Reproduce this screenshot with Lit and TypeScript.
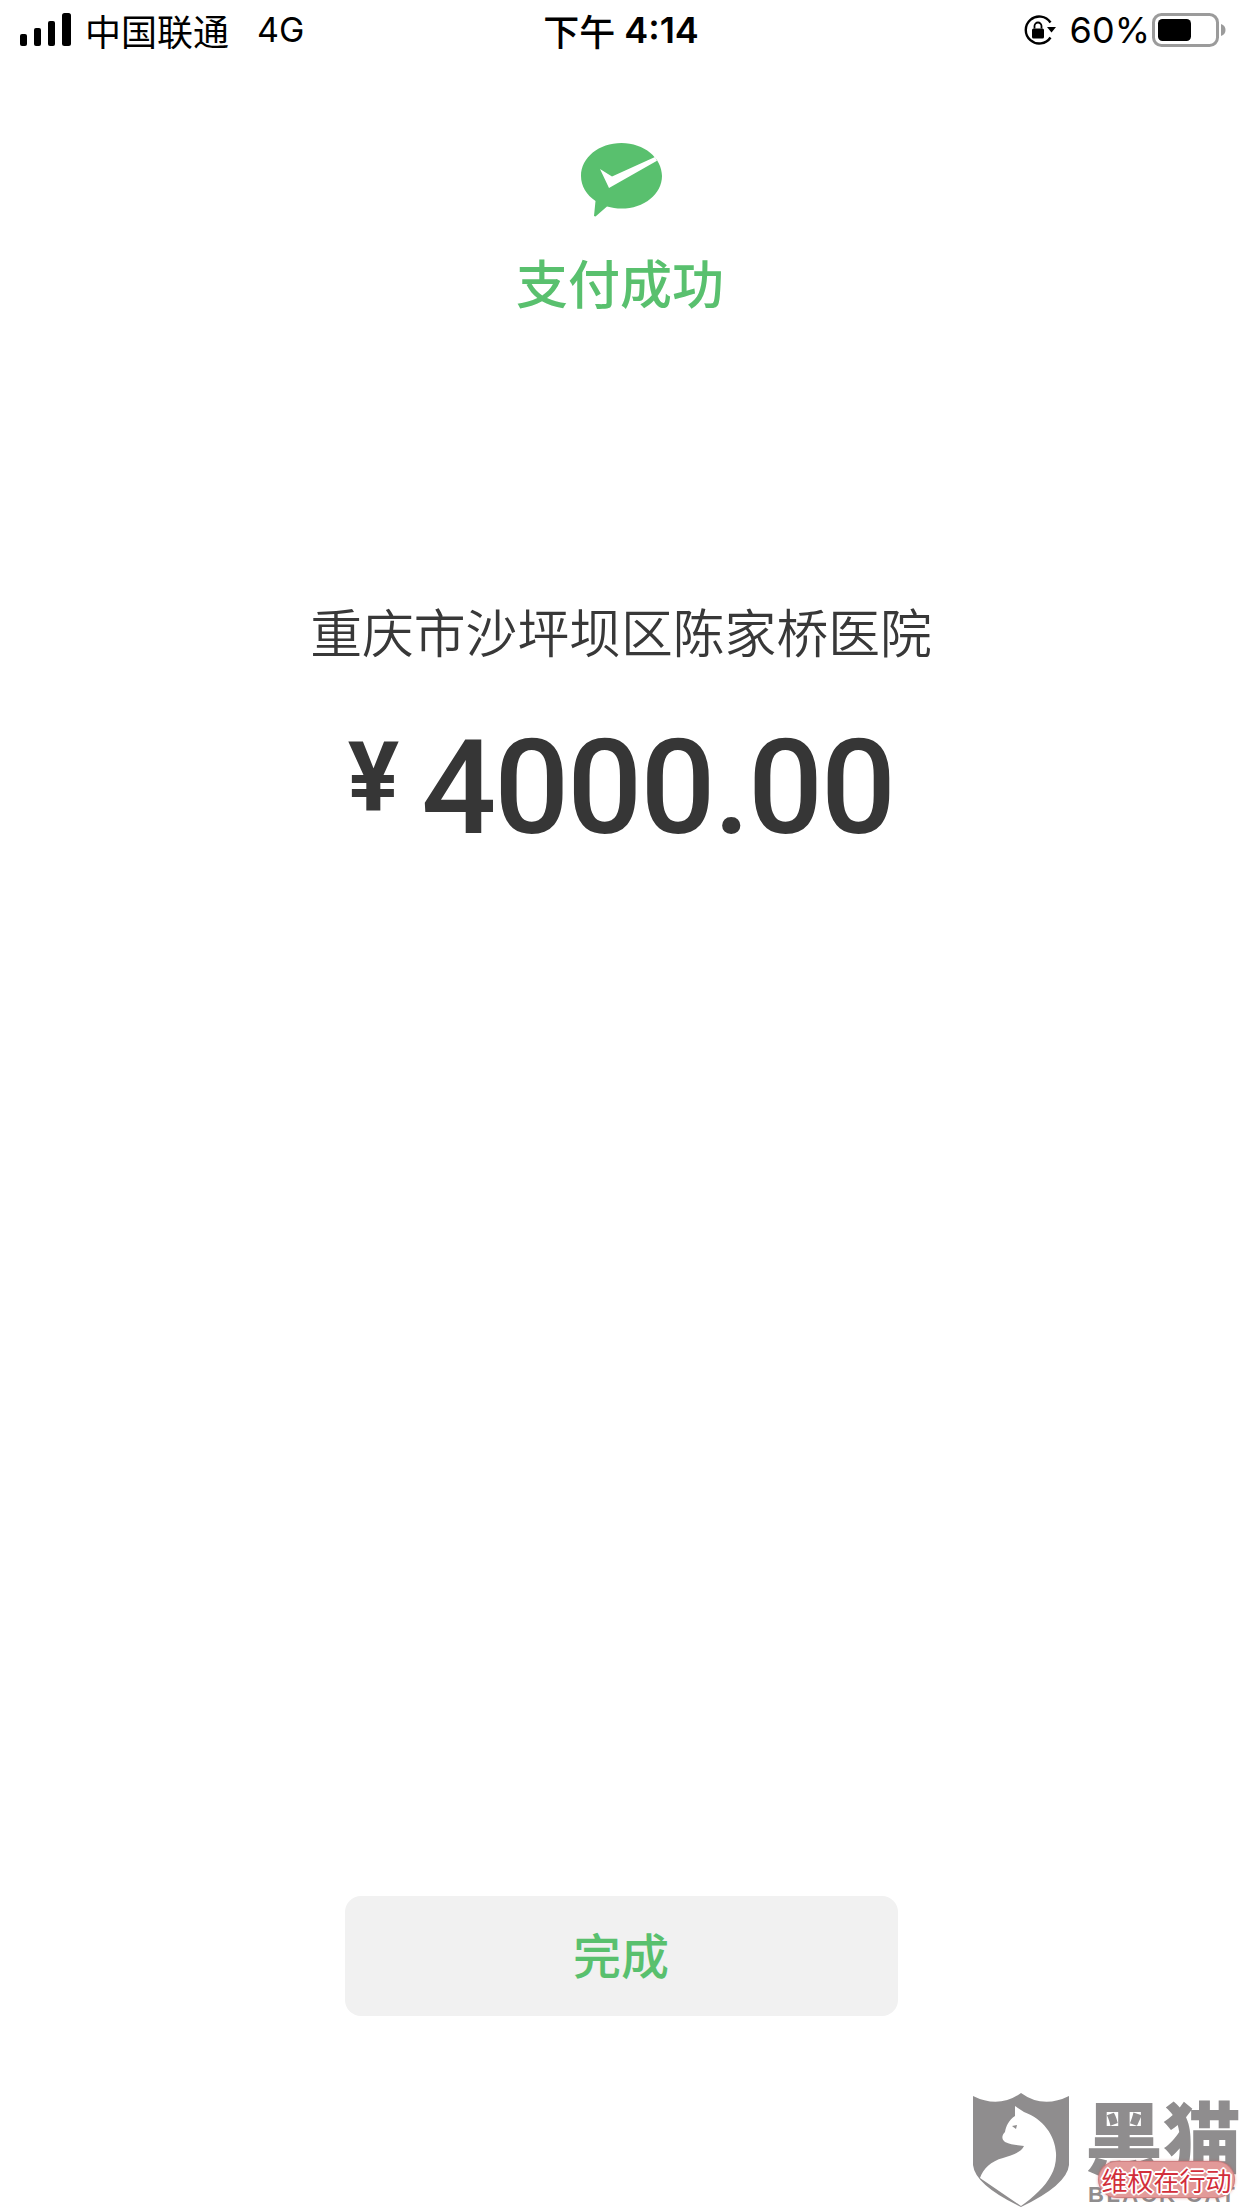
import { LitElement, html, css } from "lit";
import { customElement } from "lit/decorators.js";

const CJK = `"Noto Sans CJK SC", "Inter", sans-serif`;
const UI = `"Inter", "Noto Sans CJK SC", sans-serif`;

@customElement("app-root")
export class AppRoot extends LitElement {
  static styles = css`
    :host {
      display: block;
      position: relative;
      width: 1242px;
      height: 2208px;
      background: #fff;
      overflow: hidden;
      font-family: ${css([CJK] as any)};
    }
    .page { display: flex; flex-direction: column; align-items: center; height: 100%; }
    .status {
      align-self: stretch;
      height: 60px;
      display: grid;
      grid-template-columns: 1fr auto 1fr;
      align-items: center;
      color: #000;
      font-size: 36px;
    }
    .left { display: flex; align-items: center; padding-left: 20px; }
    .bars { display: block; margin-right: 13px; }
    .carrier { line-height: 60px; }
    .net { margin-left: 28px; font-family: ${css([UI] as any)}; font-size: 34px; line-height: 60px; }
    .time { font-size: 36px; font-weight: 500; line-height: 60px; display: flex; gap: 9px; }
    .time b { font-family: ${css([UI] as any)}; font-weight: 600; font-size: 36px; }
    .right { display: flex; align-items: center; justify-content: flex-end; padding-right: 16px; }
    .pct { font-family: ${css([UI] as any)}; font-size: 36px; margin: 0 2px 0 14px; line-height: 60px; }
    .logo { display: block; margin-top: 83px; }
    .title { margin-top: 30px; margin-right: 2px; font-size: 52px; line-height: 70px; color: #59c06e; font-weight: 500; }
    .shop { margin-top: 276px; font-size: 51.800px; line-height: 76px; color: #383838; font-weight: 350; }
    .amount { margin-top: 44px; display: flex; align-items: flex-start; color: #363636; font-family: Roboto, sans-serif; }
    .yen { font-size: 96px; font-weight: 700; line-height: 128px; margin-right: 22px; }
    .num { font-size: 132px; font-weight: 500; line-height: 150px; letter-spacing: -2px; }
    .done {
      margin-top: auto;
      margin-bottom: 192px;
      width: 553px;
      height: 120px;
      border-radius: 16px;
      border: 0;
      padding: 0 0 7px;
      background: #f1f1f1;
      color: #59c06e;
      font-family: inherit;
      font-size: 48px;
      font-weight: 500;
    }
    .wm { position: absolute; left: 973px; top: 2093px; width: 269px; height: 115px; }
    .shield { position: absolute; left: 0; top: 0; }
    .wm-cn { position: absolute; left: 112px; top: -3px; font-size: 78px; line-height: 88px; font-weight: 900; color: #8f8d8e; white-space: nowrap; }
    .wm-en { position: absolute; left: 115px; top: 90px; font-family: "Liberation Sans", sans-serif; font-size: 22px; line-height: 24px; font-weight: 700; letter-spacing: 2.500px; color: #8f8d8e; white-space: nowrap; }
    .stamp {
      position: absolute;
      left: 126px;
      top: 69px;
      width: 135px;
      height: 35px;
      border-radius: 18px;
      background: #e29a99;
      box-shadow: 0 0 0 1px #d07f80, 0 0 3px 1px rgba(190,80,80,.55);
      text-align: center;
      font-size: 26px;
      line-height: 35px;
      font-weight: 400;
      color: #d22f3b;
      white-space: nowrap;
      text-shadow: 2px 0 0 #fff, -2px 0 0 #fff, 0 2px 0 #fff, 0 -2px 0 #fff, 1px 1px 0 #fff, -1px -1px 0 #fff, 1px -1px 0 #fff, -1px 1px 0 #fff;
    }
  `;

  render() {
    return html`
      <div class="page">
        <div class="status">
          <div class="left">
            <svg class="bars" width="52" height="34" viewBox="0 0 52 34" fill="#000">
              <rect x="0" y="21" width="7" height="12" rx="2"></rect>
              <rect x="14" y="15" width="7" height="18" rx="2"></rect>
              <rect x="28" y="8" width="7" height="25" rx="2"></rect>
              <rect x="42" y="0" width="9" height="33" rx="2.5"></rect>
            </svg>
            <span class="carrier">中国联通</span>
            <span class="net">4G</span>
          </div>
          <div class="time"><span>下午</span><b>4:14</b></div>
          <div class="right">
            <svg width="33" height="30" viewBox="0 0 33 30" fill="none">
              <path d="M27.500 7.500A13.500 13.500 0 1 0 27.500 22.500" stroke="#000" stroke-width="2.400"></path>
              <path d="M24 12h9l-4.500 5.500z" fill="#000"></path>
              <rect x="9" y="13.500" width="12" height="10" rx="1.500" fill="#000"></rect>
              <path d="M11.500 13.500V11a3.500 3.500 0 0 1 7 0v2.500" stroke="#000" stroke-width="1.800"></path>
            </svg>
            <span class="pct">60%</span>
            <svg width="74" height="34" viewBox="0 0 74 34" fill="none">
              <rect x="1.500" y="1.500" width="64" height="31" rx="8" stroke="#9b9b9b" stroke-width="3"></rect>
              <rect x="6" y="6" width="33" height="22" rx="4.500" fill="#000"></rect>
              <path d="M69 11c3 1 4.500 3 4.500 6s-1.500 5-4.500 6z" fill="#9b9b9b"></path>
            </svg>
          </div>
        </div>

        <svg class="logo" width="81" height="74" viewBox="0 0 81 74">
          <path fill="#59c06e" d="M40.500 0C18 0 0 14.500 0 33c0 10 5.500 19 14.500 25L13 73l1.500.5L26 63.500c4.500 1.300 9.500 2.100 14.500 2.100C63 65.600 81 51 81 33S63 0 40.500 0z"></path>
          <path fill="#fff" d="M19 26l12 7.500L74 14l2 3.800L28 45z"></path>
        </svg>
        <div class="title">支付成功</div>
        <div class="shop">重庆市沙坪坝区陈家桥医院</div>
        <div class="amount"><span class="yen">¥</span><span class="num">4000.00</span></div>
        <button class="done">完成</button>
      </div>

      <div class="wm">
        <svg class="shield" width="97" height="115" viewBox="0 0 97 115">
          <path fill="#8f8d8e" d="M0 3Q26 16 48 0Q70 16 96 3V72Q94 92 48 114Q2 92 0 72Z"></path>
          <path fill="#fff" d="M42 13L51 19C70 26 82 42 83 60C84 76 76 88 66 98C60 104 54 109 48 113L7 85C10 76 18 68 30 65C38 62 48 60 51 53C44 52 38 52 32 49C28 46 29 42 32 39C33 33 36 27 42 23Z"></path>
          <path fill="#8f8d8e" d="M39 33l5-1-1 4z"></path>
        </svg>
        <div class="wm-cn">黑猫</div>
        <div class="wm-en">BLACK CAT</div>
        <div class="stamp">维权在行动</div>
      </div>
    `;
  }
}
